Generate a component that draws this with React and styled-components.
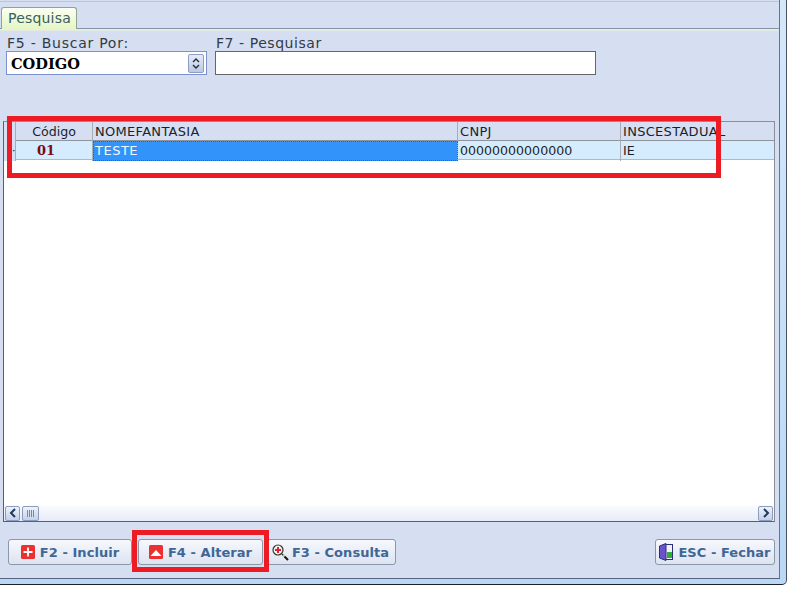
import React from "react";
import styled, { createGlobalStyle } from "styled-components";

const Global = createGlobalStyle`
  html, body {
    margin: 0;
    padding: 0;
    background: #fff;
    font-family: "DejaVu Sans", Verdana, sans-serif;
  }
`;

const Screen = styled.div`
  position: relative;
  width: 792px;
  height: 591px;
  overflow: hidden;
  background: #fff;
`;

const Frame = styled.div`
  width: 786px;
  height: 584px;
  background: linear-gradient(#d4e8fb, #c4dff8 60%, #b9d8f6);
  border-right: 1px solid #4a5160;
  border-bottom: 1px solid #1d2026;
  border-bottom-right-radius: 5px;
`;

const Panel = styled.div`
  display: flex;
  flex-direction: column;
  width: 780px;
  height: 579px;
  box-sizing: border-box;
  background: #d6def2;
  border-right: 1px solid #66758f;
  border-bottom: 1px solid #55637c;
`;

const TopLine = styled.div`
  height: 1px;
  margin-top: 1px;
  background: #c3c3cb;
`;

const TabStrip = styled.div`
  display: flex;
  align-items: flex-end;
  height: 26px;
  padding-left: 1px;
  border-bottom: 1px solid #8193ad;
`;

const Tab = styled.div`
  width: 76px;
  height: 22px;
  box-sizing: border-box;
  margin-bottom: -1px;
  padding-left: 6px;
  border: 1px solid #8fa58f;
  border-bottom: none;
  border-radius: 3px 3px 0 0;
  background: linear-gradient(#fbfff2, #e6f5c6);
  color: #37605f;
  font-size: 14px;
  letter-spacing: 0.2px;
  line-height: 20px;
`;

const TabEdge = styled.div`
  height: 2px;
  background: linear-gradient(#eef4cf, #dfe6e4);
`;

const Form = styled.div`
  display: flex;
  gap: 8px;
  padding: 4px 0 0 6px;
`;

const Field = styled.div`
  display: flex;
  flex-direction: column;
  width: ${(p) => p.$width}px;
`;

const Label = styled.label`
  height: 16px;
  padding-left: 1px;
  color: #333a44;
  font-size: 14px;
  line-height: 17px;
  letter-spacing: ${(p) => p.$spacing}px;
  white-space: nowrap;
`;

const Select = styled.div`
  display: flex;
  align-items: center;
  justify-content: space-between;
  height: 24px;
  box-sizing: border-box;
  padding: 0 2px 0 4px;
  border: 1px solid #7d91cf;
  background: #fff;
  color: #000;
  font-family: "DejaVu Serif", "Liberation Serif", serif;
  font-size: 14.6px;
  font-weight: 700;
`;

const SelectText = styled.span`
  padding-top: 1px;
`;

const Spinner = styled.div`
  display: flex;
  align-items: center;
  justify-content: center;
  width: 16px;
  height: 19px;
  box-sizing: border-box;
  border: 1px solid #8c9cc4;
  border-radius: 2px;
  background: linear-gradient(#e6ebf7, #bcc9e2);
`;

const Input = styled.div`
  height: 24px;
  box-sizing: border-box;
  border: 1px solid #666;
  background: #fff;
`;

const Grid = styled.div`
  display: flex;
  flex-direction: column;
  width: 772px;
  height: 401px;
  box-sizing: border-box;
  margin: 46px 0 0 3px;
  background: #fff;
  border: 1px solid #8a8f99;
  border-left-color: #5c6068;
  border-bottom-color: #5c6068;
`;

const Row = styled.div`
  display: grid;
  grid-template-columns: 12px 77px 365px 163px 1fr;
  height: 19px;
  box-sizing: border-box;
  border-bottom: 1px solid ${(p) => (p.$head ? "#8f949c" : "#b4b8be")};
  background: ${(p) => (p.$head ? "#d6def2" : "#d4ecfe")};
  font-size: ${(p) => (p.$head ? 13 : 12.6)}px;
  letter-spacing: ${(p) => (p.$head ? 0.3 : 0)}px;
  line-height: 20px;
  color: #1b1f2a;
`;

const Cell = styled.div`
  box-sizing: border-box;
  overflow: ${(p) => (p.$last ? "visible" : "hidden")};
  white-space: nowrap;
  padding-left: 2px;
  border-right: 1px solid ${(p) => (p.$last ? "transparent" : "#a8acb4")};
  text-align: ${(p) => (p.$center ? "center" : "left")};
`;

const HeadCode = styled(Cell)`
  padding: 0;
  letter-spacing: 0;
  font-size: 12.6px;
`;

const Indicator = styled(Cell)`
  padding: 0 0 0 8px;
  background: #d6def2;
  color: #111;
  font-size: 11px;
  text-align: left;
`;

const CodeCell = styled(Cell)`
  padding: 0 16px 0 0;
  color: #7c0a12;
  font-family: "DejaVu Serif", "Liberation Serif", serif;
  font-size: 13px;
  font-weight: 700;
`;

const SelectedCell = styled(Cell)`
  background: #3294fb;
  color: #f2f8ff;
  font-size: 13px;
  letter-spacing: 0.5px;
  outline: 1px dotted #7a5a10;
  outline-offset: -1px;
`;

const GridBody = styled.div`
  flex: 1;
`;

const ScrollBar = styled.div`
  display: flex;
  align-items: center;
  height: 16px;
  padding: 0 1px;
  background: linear-gradient(#fbfcfe, #e6ebf8);
`;

const ScrollButton = styled.div`
  display: flex;
  align-items: center;
  justify-content: center;
  width: 15px;
  height: 15px;
  box-sizing: border-box;
  border: 1px solid #8a9cc0;
  border-radius: 2px;
  background: linear-gradient(#eef2fa, #c5d1e8);
`;

const ScrollThumb = styled(ScrollButton)`
  width: 17px;
  margin-left: 2px;
  gap: 1px;
`;

const ThumbLine = styled.span`
  width: 1px;
  height: 7px;
  background: #7d8796;
`;

const Spacer = styled.div`
  flex: 1;
`;

const Footer = styled.div`
  display: flex;
  padding: 17px 4px 0 8px;
`;

const Button = styled.button`
  display: flex;
  align-items: center;
  justify-content: center;
  gap: ${(p) => p.$iconGap || 5}px;
  width: ${(p) => p.$width}px;
  height: 26px;
  margin-left: ${(p) => p.$gap || 0}px;
  padding: 0;
  box-sizing: border-box;
  border: 1px solid #8b98a8;
  border-radius: 3px;
  background: linear-gradient(#f6f8fc, #dde3f1);
  color: #3f6795;
  font-family: "DejaVu Sans", Verdana, sans-serif;
  font-size: 13px;
  font-weight: 700;
  letter-spacing: 0.05px;
  white-space: nowrap;
`;

const Mark = styled.div`
  position: absolute;
  left: ${(p) => p.$x}px;
  top: ${(p) => p.$y}px;
  width: ${(p) => p.$w}px;
  height: ${(p) => p.$h}px;
  box-sizing: border-box;
  border: 5px solid #ed1c24;
  pointer-events: none;
`;

const PlusIcon = () => (
  <svg width="14" height="14" viewBox="0 0 14 14">
    <rect x="0" y="0" width="14" height="14" rx="1.5" fill="#ec2f2f" />
    <path d="M7 2.5v9M2.5 7h9" stroke="#fff" strokeWidth="1.8" />
  </svg>
);

const UpIcon = () => (
  <svg width="14" height="14" viewBox="0 0 14 14">
    <rect x="0" y="0" width="14" height="14" rx="1.5" fill="#ec2f2f" />
    <path d="M1.5 11 7 5l5.5 6z" fill="#fff" />
  </svg>
);

const LensIcon = () => (
  <svg width="17" height="17" viewBox="0 0 17 17">
    <path d="M10 10l1.5 1.5" stroke="#333" strokeWidth="1.5" />
    <path d="M11 11l1.5 1.5" stroke="#e6c820" strokeWidth="2" />
    <path d="M12.5 12.5l3.5 3.5" stroke="#111" strokeWidth="2" />
    <circle cx="6" cy="6" r="5" fill="#f4f4f4" stroke="#333" strokeWidth="1.2" />
    <path d="M6 3v6M3 6h6" stroke="#e0202a" strokeWidth="2" />
  </svg>
);

const DoorIcon = () => (
  <svg width="14" height="18" viewBox="0 0 14 18">
    <rect x="4.5" y="1.5" width="9" height="15" fill="#eef2fa" stroke="#2a2f7a" />
    <rect x="8" y="9" width="5" height="6" fill="#2fae2f" />
    <path d="M0.5 3 7 0.5v17L0.5 15z" fill="#6a55c8" stroke="#2a2f7a" />
  </svg>
);

const SpinIcon = () => (
  <svg width="8" height="11" viewBox="0 0 8 11">
    <path d="M1 4l3-3 3 3M1 7l3 3 3-3" fill="none" stroke="#1f2a44" strokeWidth="1.4" />
  </svg>
);

const ArrowIcon = ({ flip }) => (
  <svg width="8" height="10" viewBox="0 0 8 10">
    <path
      d={flip ? "M2 1l4 4-4 4" : "M6 1L2 5l4 4"}
      fill="none"
      stroke="#1f3a5c"
      strokeWidth="2"
    />
  </svg>
);

const App = () => {
  return (
    <Screen>
      <Global />
      <Frame>
        <Panel>
          <TopLine />
          <TabStrip>
            <Tab>Pesquisa</Tab>
          </TabStrip>
          <TabEdge />
          <Form>
            <Field $width={201}>
              <Label $spacing={0.75}>F5 - Buscar Por:</Label>
              <Select>
                <SelectText>CODIGO</SelectText>
                <Spinner>
                  <SpinIcon />
                </Spinner>
              </Select>
            </Field>
            <Field $width={381}>
              <Label $spacing={0.55}>F7 - Pesquisar</Label>
              <Input />
            </Field>
          </Form>
          <Grid>
            <Row $head>
              <Indicator />
              <HeadCode $center>Código</HeadCode>
              <Cell>NOMEFANTASIA</Cell>
              <Cell>CNPJ</Cell>
              <Cell $last>INSCESTADUAL</Cell>
            </Row>
            <Row>
              <Indicator>·</Indicator>
              <CodeCell $center>01</CodeCell>
              <SelectedCell>TESTE</SelectedCell>
              <Cell>00000000000000</Cell>
              <Cell $last>IE</Cell>
            </Row>
            <GridBody />
            <ScrollBar>
              <ScrollButton>
                <ArrowIcon />
              </ScrollButton>
              <ScrollThumb>
                <ThumbLine />
                <ThumbLine />
                <ThumbLine />
                <ThumbLine />
              </ScrollThumb>
              <Spacer />
              <ScrollButton>
                <ArrowIcon flip />
              </ScrollButton>
            </ScrollBar>
          </Grid>
          <Footer>
            <Button $width={124}>
              <PlusIcon />
              F2 - Incluir
            </Button>
            <Button $width={125} $gap={6}>
              <UpIcon />
              F4 - Alterar
            </Button>
            <Button $width={131} $gap={2} $iconGap={3}>
              <LensIcon />
              F3 - Consulta
            </Button>
            <Spacer />
            <Button $width={120}>
              <DoorIcon />
              ESC - Fechar
            </Button>
          </Footer>
        </Panel>
      </Frame>
      <Mark $x={7} $y={116} $w={714} $h={62} />
      <Mark $x={132} $y={530} $w={137} $h={42} />
    </Screen>
  );
};

export default App;
